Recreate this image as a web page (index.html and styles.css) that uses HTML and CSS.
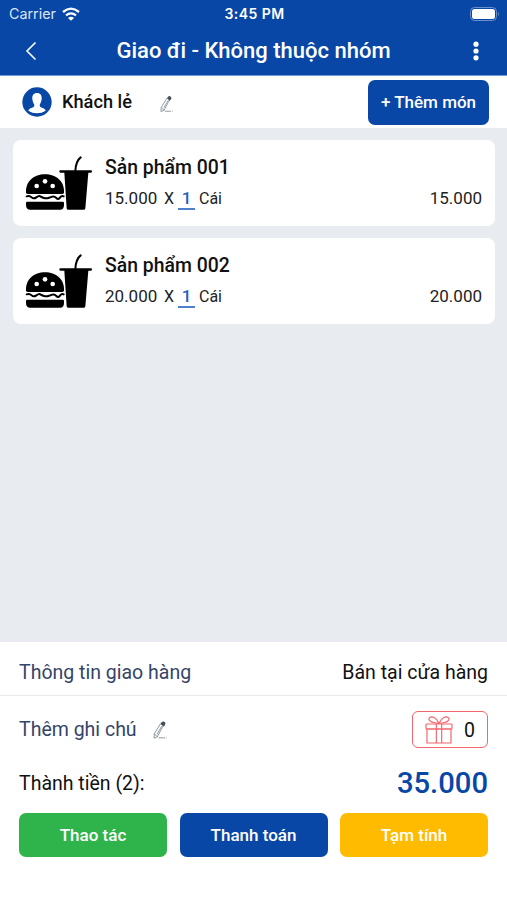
FILE: index.html
```html
<!DOCTYPE html>
<html lang="vi">
<head>
<meta charset="utf-8">
<title>Giao đi</title>
<link rel="stylesheet" href="styles.css">
</head>
<body>
<svg class="defs" width="0" height="0" aria-hidden="true">
  <symbol id="food" viewBox="30 32 204 162">
    <path d="M33 142C31 108 57 87 90 87s59 21 57 55q-1 4-6 4H39q-5 0-6-4z"/>
    <g fill="#fff"><circle cx="90" cy="108" r="7"/><circle cx="65" cy="122" r="7"/><circle cx="113" cy="122" r="7"/></g>
    <path d="M35 153q9-3 15 3t14 0 12-3 11 5 13 0 12-4 12 4 11-1 11-4" fill="none" stroke="#000" stroke-width="6" stroke-linecap="round"/>
    <path d="M37 169h106q4 0 4 4v5q0 15-12 15H46q-13 0-13-15v-5q0-4 4-4z"/>
    <path d="M136 75h92q3 0 3 3.500t-3 3.500h-8l-9 107q0 4-4 4h-48q-4 0-4-4l-7-107h-12q-3 0-3-3.500t3-3.500z"/>
    <path d="M181 77c1-19 4-32 16-41" fill="none" stroke="#000" stroke-width="6" stroke-linecap="round"/>
  </symbol>
  <symbol id="pencil" viewBox="0 0 42 54">
    <g fill="none" stroke="#65757c" stroke-width="2.200" stroke-linejoin="round">
      <path d="M22 10l9 5-18 34-10 4 1-13z"/><path d="M4 40l9 9M26 17L12 42"/><path d="M16 52h20m3 0h2"/>
    </g>
    <path d="M23 9q5-9 11-5t1 10l-4 4z" fill="#454e53"/>
  </symbol>
</svg>
<header class="header">
  <div class="status">
    <div class="carrier"><span>Carrier</span>
      <svg width="18" height="14" viewBox="0 0 54 42"><g fill="none" stroke="#fff" stroke-width="7"><path d="M3 15q24-20 48 0"/><path d="M12 25q15-12 30 0"/></g><path d="M18 33q9-8 18 0l-9 8z" fill="#fff"/></svg>
    </div>
    <span class="clock">3:45 PM</span>
    <svg class="battery" width="30" height="14" viewBox="0 0 30 14"><rect x=".5" y=".5" width="26" height="13" rx="4" fill="none" stroke="#6990cc"/><rect x="2" y="2" width="23" height="10" rx="2.500" fill="#fff"/><path d="M28 5q2 2 0 4z" fill="#6990cc"/></svg>
  </div>
  <div class="nav">
    <svg class="back" width="12" height="20" viewBox="0 0 12 20"><path d="M10.500 1.500L2 10l8.500 8.500" fill="none" stroke="#fff" stroke-width="1.600"/></svg>
    <h1 class="title">Giao đi - Không thuộc nhóm</h1>
    <svg class="more" width="6" height="20" viewBox="0 0 6 20" fill="#fff"><circle cx="3" cy="3.200" r="2.600"/><circle cx="3" cy="10" r="2.600"/><circle cx="3" cy="16.800" r="2.600"/></svg>
  </div>
</header>
<section class="customer">
  <svg class="avatar" width="30" height="30" viewBox="0 0 90 90"><circle cx="45" cy="45" r="44" fill="#0847a6"/><path d="M45 18c10 0 15 7 14 18-1 8-3 13-6 17 0 6 3 8 9 10 6 2 8 5 9 8-15 10-37 10-52 0 1-3 3-6 9-8 6-2 9-4 9-10-3-4-5-9-6-17-1-11 4-18 14-18z" fill="#fff"/></svg>
  <span class="customer-name">Khách lẻ</span>
  <svg class="pencil" width="13" height="17"><use href="#pencil"/></svg>
  <button class="add">+ Thêm món</button>
</section>
<main class="list">
  <article class="card">
    <svg class="food" width="68" height="54"><use href="#food"/></svg>
    <div class="info">
      <h2 class="name">Sản phẩm 001</h2>
      <div class="line"><span class="unit-price">15.000</span><span class="times">X</span><span class="qty">1</span><span class="unit">Cái</span><span class="sum">15.000</span></div>
    </div>
  </article>
  <article class="card">
    <svg class="food" width="68" height="54"><use href="#food"/></svg>
    <div class="info">
      <h2 class="name">Sản phẩm 002</h2>
      <div class="line"><span class="unit-price">20.000</span><span class="times">X</span><span class="qty">1</span><span class="unit">Cái</span><span class="sum">20.000</span></div>
    </div>
  </article>
</main>
<footer class="footer">
  <div class="delivery"><span class="label shipping">Thông tin giao hàng</span><span class="place">Bán tại cửa hàng</span></div>
  <div class="note"><span class="label note-label">Thêm ghi chú</span>
    <svg class="pencil" width="14" height="19"><use href="#pencil"/></svg>
    <div class="gift">
      <svg width="28" height="28" viewBox="0 0 84 84"><g fill="none" stroke="#f2656c" stroke-width="3.500" stroke-linejoin="round"><rect x="3" y="24" width="78" height="15" rx="2"/><path d="M6 39h72v42H6zM34 24v57M50 24v57M42 22C34 4 20-1 14 5s1 15 28 17C69 20 76 11 70 5S50 4 42 22z"/></g></svg>
      <span>0</span>
    </div>
  </div>
  <div class="total"><span class="total-label">Thành tiền (2):</span><strong class="amount">35.000</strong></div>
  <div class="actions"><button class="green">Thao tác</button><button class="blue">Thanh toán</button><button class="yellow">Tạm tính</button></div>
</footer>
</body>
</html>
```
FILE: styles.css
```css
* { box-sizing: border-box; }
body { margin: 0; width: 507px; height: 900px; overflow: hidden; display: flex; flex-direction: column; background: #fff; color: #111; font-family: Roboto, sans-serif; }
h1, h2 { margin: 0; font-weight: 500; }
svg { display: block; flex: none; }
span, h1, h2, strong, button { white-space: nowrap; }
.defs { display: none; }
button { border: 0; border-radius: 7px; padding: 0 0 1px; height: 44px; color: #fff; font: 500 17px Roboto, sans-serif; }
.header { height: 76px; flex: none; background: #0847a6; color: #fff; border-bottom: 1px solid #6f9bd9; }
.status { height: 27px; display: grid; grid-template-columns: 1fr auto 1fr; align-items: center; padding: 0 7px 0 9px; font-family: Inter, sans-serif; }
.carrier { display: flex; align-items: center; gap: 6px; font-size: 14.300px; color: #d8e5fa; }
.clock { font-size: 14px; font-weight: 600; letter-spacing: 0.450px; }
.battery { justify-self: end; }
.nav { height: 48px; display: flex; align-items: center; justify-content: space-between; padding: 0 28px 0 25px; }
.title { font-size: 22px; margin: 0 3px 2px 0; }
.customer { height: 52px; flex: none; display: flex; align-items: center; padding: 0 18px 0 22px; }
.customer-name { margin: 0 0 2px 10px; width: 70px; font-size: 18.200px; font-weight: 500; }
.customer .pencil { margin: 3px 0 0 28px; }
.add { width: 121px; height: 45px; margin-left: auto; background: #0847a6; }
.list { flex: 1; background: #e8ebf0; padding: 12px 12px 0 13px; display: flex; flex-direction: column; gap: 12px; }
.card { height: 86px; border-radius: 8px; background: #fff; display: flex; padding: 15px 13px 0 12px; }
.food { margin-top: 1px; }
.info { flex: 1; margin-left: 12px; }
.name { font-size: 19.400px; line-height: 26px; }
.line { display: flex; align-items: center; margin-top: 4px; height: 26px; font-size: 17px; color: #222; }
.unit-price { width: 59px; }
.times { width: 14px; font-size: 16px; }
.qty { width: 17px; height: 23px; line-height: 23px; text-align: center; color: #235fbd; font-weight: 500; border-bottom: 2px solid #4c82cb; }
.unit { margin-left: 4px; font-size: 16px; }
.sum { margin-left: auto; }
.footer { height: 258px; flex: none; }
.delivery { height: 54px; padding: 7px 19px 0; border-bottom: 1px solid #e8ebee; display: flex; align-items: center; justify-content: space-between; font-size: 19.500px; }
.label { color: #344568; }
.note { height: 67px; display: flex; align-items: center; padding: 0 19px; font-size: 19.500px; }
.note .pencil { margin-left: 16px; }
.gift { width: 76px; height: 37px; margin-left: auto; border: 1px solid #f2656c; border-radius: 6px; display: flex; align-items: center; padding-left: 12px; gap: 11px; }
.gift span { padding-top: 2px; }
.total { height: 40px; padding: 0 19px; display: flex; align-items: center; justify-content: space-between; }
.total-label { font-size: 19.500px; }
.amount { color: #0847a6; font-size: 29.200px; font-weight: 500; }
.actions { margin-top: 10px; padding: 0 19px; display: grid; grid-template-columns: repeat(3, 1fr); gap: 12.500px; }
.green { background: #2eb44b; }
.blue { background: #0847a6; }
.yellow { background: #ffbb00; }
```
